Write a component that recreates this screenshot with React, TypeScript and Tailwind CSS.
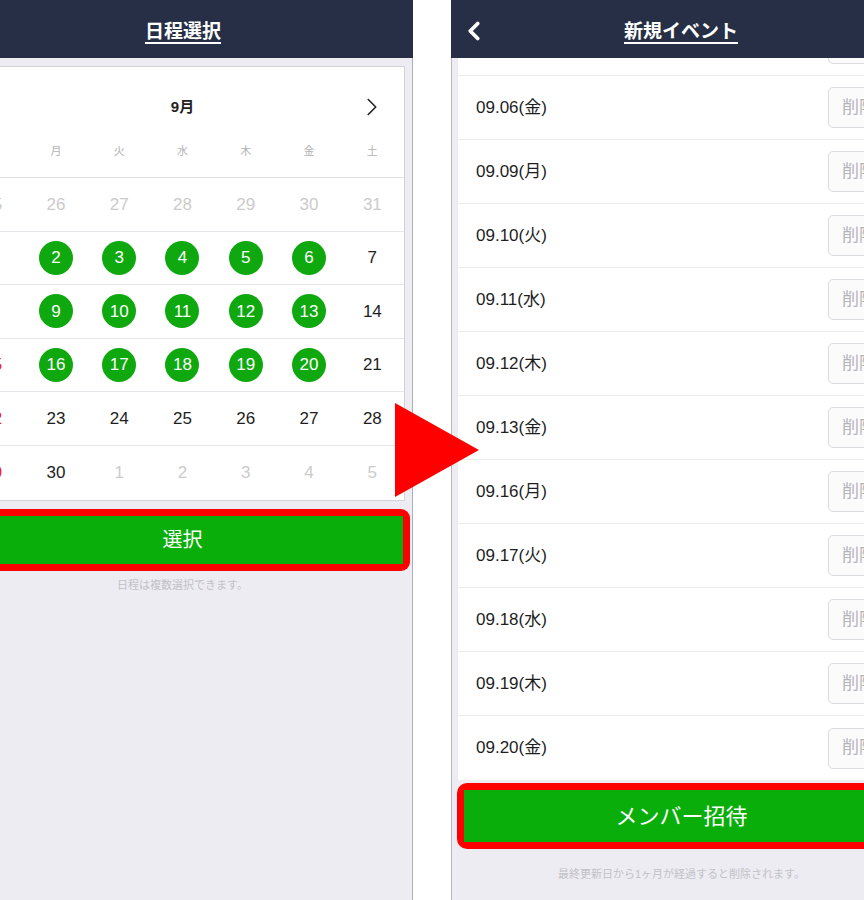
import { ChevronLeft, ChevronRight } from 'lucide-react';

type Day = { n: number; tone: 'muted' | 'normal' | 'sun' | 'picked' };

const FONT = { fontFamily: '"Liberation Sans", "Noto Sans CJK JP", sans-serif' };

const weekdays = ['日', '月', '火', '水', '木', '金', '土'];

function buildWeeks(): Day[][] {
  const picked = new Set([2, 3, 4, 5, 6, 9, 10, 11, 12, 13, 16, 17, 18, 19, 20]);
  const weeks: Day[][] = [];
  weeks.push([25, 26, 27, 28, 29, 30, 31].map(n => ({ n, tone: 'muted' as const })));
  let d = 1;
  for (let w = 0; w < 5; w++) {
    const row: Day[] = [];
    for (let i = 0; i < 7; i++) {
      if (d > 30) {
        row.push({ n: d - 30, tone: 'muted' });
      } else if (i === 0) {
        row.push({ n: d, tone: 'sun' });
      } else {
        row.push({ n: d, tone: picked.has(d) ? 'picked' : 'normal' });
      }
      d++;
    }
    weeks.push(row);
  }
  return weeks;
}

const events = [
  '09.05(木)', '09.06(金)', '09.09(月)', '09.10(火)', '09.11(水)', '09.12(木)',
  '09.13(金)', '09.16(月)', '09.17(火)', '09.18(水)', '09.19(木)', '09.20(金)',
];

function Header({ title, back }: { title: string; back?: boolean }) {
  return (
    <div className="h-[58px] shrink-0 bg-[#262f45] relative flex items-center justify-center pt-[7px]">
      {back && (
        <ChevronLeft className="absolute left-[8px] top-[16px] text-white" size={30} strokeWidth={3} />
      )}
      <span className="text-white text-[19px] font-bold underline underline-offset-[4px] decoration-[1.5px]">{title}</span>
    </div>
  );
}

function DayCell({ day }: { day: Day }) {
  if (day.tone === 'picked') {
    return (
      <div className="flex items-center justify-center">
        <span className="w-[34px] h-[34px] rounded-full bg-[#0fa80f] text-white text-[17px] flex items-center justify-center">{day.n}</span>
      </div>
    );
  }
  const color = day.tone === 'muted' ? 'text-[#cbcbcb]' : day.tone === 'sun' ? 'text-[#e8281f]' : 'text-[#1e1e1e]';
  return <div className={`flex items-center justify-center text-[17px] ${color}`}>{day.n}</div>;
}

function CalendarPhone() {
  const weeks = buildWeeks();
  return (
    <div className="w-[413px] h-full overflow-hidden shrink-0">
      <div className="w-[460px] ml-[-47px] h-full flex flex-col">
        <Header title="日程選択" />
        <div className="flex-1 bg-[#edecf2] border-r border-[#aeaeb6] flex flex-col">
          <div className="mx-[7px] mt-[8px] bg-white border border-[#d2d2d8] pt-[10px]">
            <div className="grid grid-cols-7 h-[60px] items-center">
              <div className="flex justify-center"><ChevronLeft size={30} strokeWidth={1.3} className="text-[#222]" /></div>
              <div className="col-span-5 text-center text-[15px] font-bold text-[#222]">9月</div>
              <div className="flex justify-center"><ChevronRight size={30} strokeWidth={1.3} className="text-[#222]" /></div>
            </div>
            <div className="grid grid-cols-7 h-[41px] pt-[7px] border-b border-[#e2e2e6]">
              {weekdays.map(w => (
                <div key={w} className="text-center text-[11px] leading-[14px] text-[#b3b3b3]">{w}</div>
              ))}
            </div>
            {weeks.map((row, i) => (
              <div key={i} className={`grid grid-cols-7 h-[53.6px] ${i < weeks.length - 1 ? 'border-b border-[#e6e6ea]' : ''}`}>
                {row.map((day, j) => <DayCell key={j} day={day} />)}
              </div>
            ))}
          </div>
          <div className="mx-[2px] mt-[8px] bg-[#ff0000] p-[7px] rounded-[9px]">
            <div className="h-[48px] bg-[#0aae0a] flex items-center justify-center text-white text-[20px]">選択</div>
          </div>
          <p className="mt-[8px] text-center text-[11px] leading-[13px] text-[#c2c2c6]">日程は複数選択できます。</p>
        </div>
      </div>
    </div>
  );
}

function EventPhone() {
  return (
    <div className="w-[460px] h-full shrink-0 flex flex-col">
      <Header title="新規イベント" back />
      <div className="flex-1 bg-[#edecf2] border-l border-[#b8b8c0] overflow-hidden flex flex-col">
        <div className="ml-[6px] mr-[7px] mt-[-46px] bg-white">
          {events.map((e, i) => (
            <div key={e} className={`h-[64px] flex items-center justify-between pl-[18px] pr-[14px] ${i < events.length - 1 ? 'border-b border-[#ececef]' : ''}`}>
              <span className="text-[17px] text-[#1e1e1e]">{e}</span>
              <span className="w-[62px] h-[41px] border border-[#dcdce0] rounded-[5px] bg-[#fbfbfc] flex items-center justify-center text-[17px] text-[#b4b4b8]">削除</span>
            </div>
          ))}
        </div>
        <div className="ml-[5px] mr-[5px] mt-[3px] bg-[#ff0000] p-[7px] rounded-[10px]">
          <div className="h-[52px] bg-[#0aae0a] flex items-center justify-center text-white text-[22px]">メンバー招待</div>
        </div>
        <p className="mt-[18px] text-center text-[11px] leading-[14px] text-[#c2c2c6]">最終更新日から1ヶ月が経過すると削除されます。</p>
      </div>
    </div>
  );
}

export default function App() {
  return (
    <div className="relative w-[864px] h-[900px] overflow-hidden bg-white flex" style={FONT}>
      <CalendarPhone />
      <div className="w-[38px] shrink-0" />
      <EventPhone />
      <svg className="absolute left-[395px] top-[403px]" width="85" height="94" viewBox="0 0 85 94">
        <polygon points="0,0 0,94 84,47" fill="#ff0000" />
      </svg>
    </div>
  );
}
